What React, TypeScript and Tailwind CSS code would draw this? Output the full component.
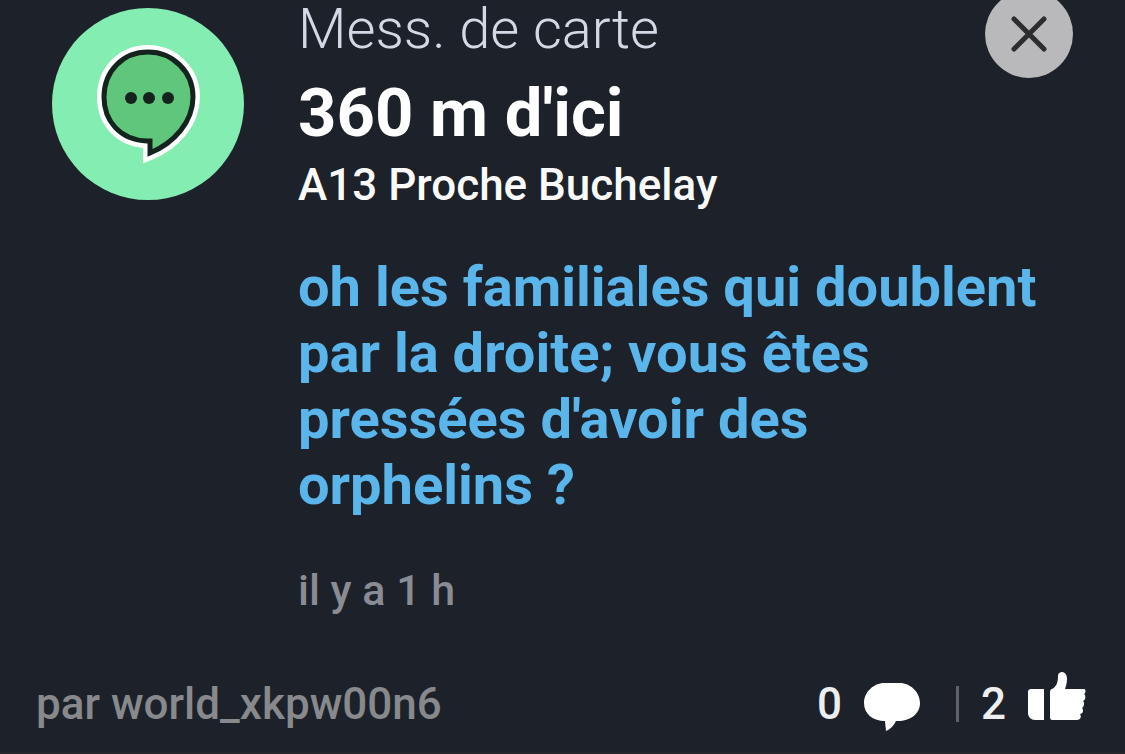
import React from 'react';

interface MapMessage {
  kind: string;
  distance: string;
  place: string;
  text: string;
  age: string;
  author: string;
  comments: number;
  likes: number;
}

// non-breaking space before the question mark, as usual in French
const message: MapMessage = {
  kind: 'Mess. de carte',
  distance: "360 m d'ici",
  place: 'A13 Proche Buchelay',
  text: "oh les familiales qui doublent par la droite; vous êtes pressées d'avoir des orphelins\u00a0?",
  age: 'il y a 1 h',
  author: 'world_xkpw00n6',
  comments: 0,
  likes: 2,
};

const BUBBLE = 'M95 133C68 132 52 113 52 89C52 63 71 44 96 44C121 44 141 64 141 89C141 114 122 135 98 145V133Z';

const ChatBadge: React.FC = () => (
  <svg className="w-48 h-48 shrink-0" viewBox="0 0 192 192" aria-hidden="true">
    <circle cx="96" cy="96" r="96" fill="#84edb1" />
    {/* white halo under the dark outline */}
    <path d={BUBBLE} fill="#fff" stroke="#fff" strokeWidth="14" />
    <path d={BUBBLE} fill="#5fc67b" stroke="#14231e" strokeWidth="5" />
    <circle cx="79" cy="90" r="6" fill="#14231e" />
    <circle cx="97" cy="90" r="6" fill="#14231e" />
    <circle cx="116" cy="90" r="6" fill="#14231e" />
  </svg>
);

const CloseIcon: React.FC = () => (
  <svg className="w-9 h-9" viewBox="0 0 36 36" fill="none" stroke="#2c2d2f" strokeWidth="5" strokeLinecap="round" aria-hidden="true">
    <path d="M3 3L33 33M33 3L3 33" />
  </svg>
);

const CommentIcon: React.FC = () => (
  <svg className="w-14 h-[54px]" viewBox="0 -6 56 54" fill="#fff" aria-hidden="true">
    <path d="M20 0H36C46 0 56 9 56 20C56 31 46 38 34 38H32C30 42 27 46 22 48L21 38C9 38 0 31 0 20C0 9 10 0 20 0Z" />
  </svg>
);

const ThumbIcon: React.FC = () => (
  <svg className="w-[58px] h-16" viewBox="0 0 58 64" fill="#fff" aria-hidden="true">
    <path d="M3 17H16V48H7C3 48 0 45 0 41V20C0 18 1 17 3 17Z" />
    <path d="M24 17C28 15 30 11 30 4C30 1 32 0 34 0C37 0 39 3 39 7C39 11 38 14 37 17H56C58 17 58 21 56 22C58 23 58 28 55 29C57 31 56 35 54 36C56 38 55 42 52 42C54 45 52 48 49 48H24C23 48 22 47 22 45V20C22 18 23 17 24 17Z" />
  </svg>
);

const App: React.FC = () => {
  return (
    <main className="min-h-screen bg-[#1d2129] font-[Roboto,sans-serif] flex flex-col border-b-2 border-[#24262b]">
      <article className="flex gap-[54px] px-[52px]">
        <div className="pt-2">
          <ChatBadge />
        </div>
        <div className="flex-1 min-w-0">
          <header className="flex justify-between items-start">
            <div>
              <p className="text-[56px] leading-[58px] font-light text-[#d3d9e4]">{message.kind}</p>
              <h1 className="mt-4 text-[67px] leading-[78px] font-bold text-white">{message.distance}</h1>
              <p className="mt-2 text-[44px] leading-[50px] font-medium text-[#fafafa]">{message.place}</p>
            </div>
            <button type="button" aria-label="Fermer" className="-mt-[10px] w-[88px] h-[88px] shrink-0 rounded-full bg-[#b9b8ba] flex items-center justify-center">
              <CloseIcon />
            </button>
          </header>
          <p className="mt-11 text-[56px] leading-[66px] font-bold text-[#5ab5ea]">{message.text}</p>
          <time className="block mt-12 text-[43px] leading-[48px] font-medium text-[#898c94]">{message.age}</time>
        </div>
      </article>

      <footer className="mt-[58px] pl-9 pr-[39px] pb-3 flex items-center justify-between text-[44px] leading-[50px] font-medium">
        <p className="text-[#87898d]">par {message.author}</p>
        <div className="flex items-center text-[#eceef2]">
          <button type="button" aria-label={`${message.comments} commentaires`} className="flex items-center gap-[22px]">
            {message.comments}
            <CommentIcon />
          </button>
          <span className="ml-9 mr-[22px] w-[3px] h-9 bg-[#5f6268]" />
          <button type="button" aria-label={`${message.likes} mentions j'aime`} className="flex items-center gap-[22px]">
            {message.likes}
            <ThumbIcon />
          </button>
        </div>
      </footer>
    </main>
  );
};

export default App;
